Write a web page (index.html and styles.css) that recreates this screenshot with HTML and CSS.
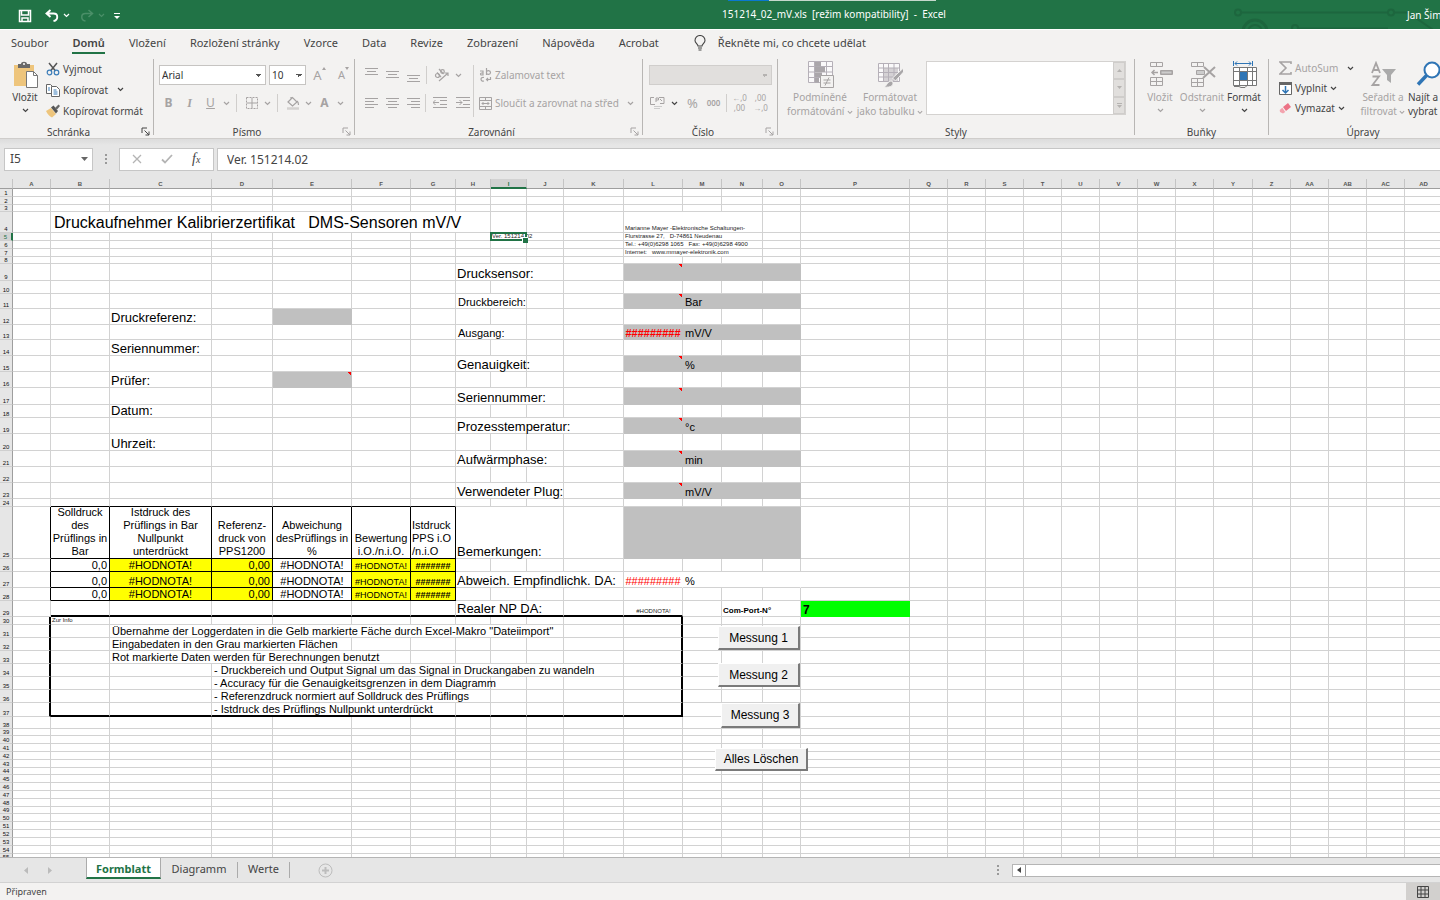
FILE: index.html
```html
<!DOCTYPE html>
<html lang="cs">
<head>
<meta charset="utf-8">
<title>151214_02_mV.xls - Excel</title>
<link rel="stylesheet" href="styles.css">
</head>
<body>
<svg class="defs" aria-hidden="true">
  <symbol id="chev" viewBox="0 0 7 5"><path d="M1 1l2.500 2.500L6 1" fill="none" stroke="currentColor" stroke-width="1.200"/></symbol>
  <symbol id="launch" viewBox="0 0 9 9"><path d="M1 6V1h5M3.500 3.500L8 8M8 4.500V8H4.500" fill="none" stroke="currentColor"/></symbol>
</svg>

<header class="titlebar">
  <div class="qat">
    <button aria-label="Uložit"><svg width="14" height="14" viewBox="0 0 14 14"><path d="M1.500 1.500h11v11h-11zM3.500 2v4h7V2M4 12.500V9h6v3.500" fill="none" stroke="#fff" stroke-width="1.500"/></svg></button>
    <button class="undo" aria-label="Zpět"><svg width="14" height="13" viewBox="0 0 14 13"><path d="M5.500 1L1.500 4.500l4 3.500M2 4.500h6.500c5 0 5 6.500 0 7.500" fill="none" stroke="#fff" stroke-width="1.900"/></svg><svg class="chev"><use href="#chev"/></svg></button>
    <button class="undo redo" aria-label="Znovu"><svg width="14" height="13" viewBox="0 0 14 13"><path d="M8.500 1l4 3.500-4 3.500M12 4.500H5.500c-5 0-5 6.500 0 7.500" fill="none" stroke="currentColor" stroke-width="1.500"/></svg><svg class="chev"><use href="#chev"/></svg></button>
    <button aria-label="Přizpůsobit"><svg width="6" height="8" viewBox="0 0 6 8"><path d="M0 1.500h6" stroke="#fff"/><path d="M0 4h6L3 7z" fill="#fff"/></svg></button>
  </div>
  <div class="doc-title">151214_02_mV.xls&nbsp; [režim kompatibility]&nbsp; -&nbsp; Excel</div>
  <svg class="circuit" width="220" height="29" viewBox="0 0 220 29" fill="none" stroke="#1d663e" stroke-width="2"><circle cx="18" cy="12.500" r="3"/><path d="M21 12.500h147"/><circle cx="171" cy="12.500" r="3"/><path d="M174 12.500h14l26 18"/><circle cx="35" cy="32" r="12" stroke-width="3"/><circle cx="35" cy="32" r="7"/><circle cx="75" cy="28" r="3"/><path d="M78 28.500h90"/></svg>
  <div class="user">Jan Šim</div>
</header>

<nav class="tabs">
  <a href="#">Soubor</a><a href="#" class="on">Domů</a><a href="#">Vložení</a><a href="#">Rozložení stránky</a><a href="#">Vzorce</a><a href="#">Data</a><a href="#">Revize</a><a href="#">Zobrazení</a><a href="#">Nápověda</a><a href="#">Acrobat</a>
  <button class="tell"><svg width="12" height="16" viewBox="0 0 12 16" fill="none" stroke="#444" stroke-width="1.100"><path d="M4 11C4 9 1 8 1 5.500a5 5 0 0110 0C11 8 8 9 8 11zM4 13h4M4.500 15h3"/></svg>Řekněte mi, co chcete udělat</button>
</nav>

<section class="ribbon">
  <div class="group g-clip">
    <div class="tools">
      <button class="big"><svg width="27" height="27" viewBox="0 0 27 27"><path d="M2 4h20v21H2z" fill="#eec57c"/><path d="M6 3h3c0-3 6-3 6 0h3v4H6z" fill="#696969"/><circle cx="12" cy="3" r="1" fill="#fff"/><path d="M14.500 10.500h7l4 4v12h-11z" fill="#fff" stroke="#777"/><path d="M21.500 10.500v4h4" fill="none" stroke="#777"/></svg><span>Vložit</span><svg class="chev"><use href="#chev"/></svg></button>
      <div class="stack">
        <button class="row"><svg width="14" height="14" viewBox="0 0 14 14" fill="none"><path d="M3 1l6.500 8M11 1L4.500 9" stroke="#555" stroke-width="1.500"/><circle cx="3.500" cy="10.500" r="2.300" stroke="#3b7cb8" stroke-width="1.200"/><circle cx="10.500" cy="10.500" r="2.300" stroke="#3b7cb8" stroke-width="1.200"/></svg>Vyjmout</button>
        <button class="row"><svg width="14" height="14" viewBox="0 0 14 14" fill="#fff" stroke="#666"><path d="M.500 1.500h4l2 2v7h-6z"/><path d="M5.500 3.500h5l3 3v7h-8z"/><path d="M2 5h2M2 7h2M7.500 7h3M7.500 9h4M7.500 11h4" stroke="#3b7cb8"/></svg>Kopírovat<svg class="chev gap"><use href="#chev"/></svg></button>
        <button class="row"><svg width="14" height="14" viewBox="0 0 14 14"><path d="M0 7l5-3 5 6-4 3.500C3.500 12.500 1.500 10 0 7z" fill="#eec57c"/><path d="M5 3.500l2.500-2L12 7l-2 2.500z" fill="#555"/><path d="M9 4l3.500-3.500L14 2l-3 3.500z" fill="#666"/></svg>Kopírovat formát</button>
      </div>
    </div>
    <div class="glabel">Schránka</div><button class="launch" aria-label="Schránka – více"><svg><use href="#launch"/></svg></button>
  </div>

  <div class="group g-font">
    <div class="lines">
      <div class="line">
        <select class="fontname" aria-label="Písmo"><option>Arial</option></select>
        <select class="fontsize" aria-label="Velikost písma"><option>10</option></select>
        <button class="ib off" aria-label="Zvětšit písmo"><span class="grow">A</span><svg class="tick" viewBox="0 0 4 3"><path d="M0 3l2-3 2 3z" fill="currentColor"/></svg></button>
        <button class="ib off" aria-label="Zmenšit písmo"><span class="shrink">A</span><svg class="tick" viewBox="0 0 4 3"><path d="M0 0l2 3 2-3z" fill="currentColor"/></svg></button>
      </div>
      <div class="line off">
        <button class="ib"><b>B</b></button><button class="ib serif"><i>I</i></button><button class="ib"><u>U</u></button><svg class="chev"><use href="#chev"/></svg><span class="sep"></span>
        <button class="ib" aria-label="Ohraničení"><svg width="12" height="12" viewBox="0 0 12 12" fill="none" stroke="currentColor"><path d="M.500.500h11v11H.500z" stroke-dasharray="2 1"/><path d="M6 1v10M1 6h10"/></svg></button><svg class="chev"><use href="#chev"/></svg><span class="sep"></span>
        <button class="ib" aria-label="Barva výplně"><svg width="14" height="14" viewBox="0 0 14 14" fill="none" stroke="currentColor" stroke-width="1.200"><path d="M2 6l4.500-4.500L11 6 6.500 10zM5 4V1M11 5c1.500 1 1.500 3 1.500 4"/><path d="M1 12.500h12" stroke="#d4d2d0" stroke-width="2.500"/></svg></button><svg class="chev"><use href="#chev"/></svg>
        <button class="ib" aria-label="Barva písma"><b>A</b></button><svg class="chev"><use href="#chev"/></svg>
      </div>
    </div>
    <div class="glabel">Písmo</div><button class="launch off" aria-label="Písmo – více"><svg><use href="#launch"/></svg></button>
  </div>

  <div class="group g-align">
    <div class="tools">
      <div class="lines off">
        <div class="line">
          <button class="ib" aria-label="Nahoru"><svg width="13" height="16" viewBox="0 0 13 16" stroke="currentColor"><path d="M0 1.500h13M2 4.500h9M0 7.500h13"/></svg></button><button class="ib" aria-label="Na střed svisle"><svg width="13" height="16" viewBox="0 0 13 16" stroke="currentColor"><path d="M0 4.500h13M2 7.500h9M0 10.500h13"/></svg></button><button class="ib" aria-label="Dolů"><svg width="13" height="16" viewBox="0 0 13 16" stroke="currentColor"><path d="M0 8.500h13M2 11.500h9M0 14.500h13"/></svg></button><span class="sep"></span>
          <button class="ib wide" aria-label="Orientace"><svg width="15" height="14" viewBox="0 0 15 14" fill="none" stroke="currentColor" stroke-width="1.200"><circle cx="3.500" cy="7.500" r="2"/><path d="M3 4.500l4 4.500M5 1l4.500 5"/><circle cx="8.500" cy="3.500" r="1.800"/><path d="M5 13l8.500-7.500M10.500 5h3.500v3"/></svg></button><svg class="chev"><use href="#chev"/></svg>
        </div>
        <div class="line">
          <button class="ib" aria-label="Vlevo"><svg width="13" height="11" viewBox="0 0 13 11" stroke="currentColor"><path d="M0 .500h13M0 3.500h9M0 6.500h13M0 9.500h9"/></svg></button><button class="ib" aria-label="Na střed"><svg width="13" height="11" viewBox="0 0 13 11" stroke="currentColor"><path d="M0 .500h13M2 3.500h9M0 6.500h13M2 9.500h9"/></svg></button><button class="ib" aria-label="Vpravo"><svg width="13" height="11" viewBox="0 0 13 11" stroke="currentColor"><path d="M0 .500h13M4 3.500h9M0 6.500h13M4 9.500h9"/></svg></button><span class="sep"></span>
          <button class="ib wide" aria-label="Zmenšit odsazení"><svg width="14" height="12" viewBox="0 0 14 12" fill="none" stroke="currentColor"><path d="M0 .500h14M7 3.500h7M7 7.500h7M0 10.500h14M0 5.500h6M2.500 3L0 5.500 2.500 8"/></svg></button><button class="ib" aria-label="Zvětšit odsazení"><svg width="14" height="12" viewBox="0 0 14 12" fill="none" stroke="currentColor"><path d="M0 .500h14M7 3.500h7M7 7.500h7M0 10.500h14M0 5.500h6M3.500 3L6 5.500 3.500 8"/></svg></button>
        </div>
      </div>
      <span class="sep tall"></span>
      <div class="lines off">
        <div class="line"><button class="row"><svg width="13" height="14" viewBox="0 0 13 14" fill="none" stroke="currentColor" stroke-width="1.200"><path d="M1 3h3v4H2.500a1 1 0 010-2H4M7.500 0v7M7.500 4c0-2 4-2 4 .500S7.500 7 7.500 5M5 9.500c-4-1-4 4.500 0 3.500M11.500 9v2.500H7.500M9 10l-1.500 1.500L9 13"/></svg>Zalamovat text</button></div>
        <div class="line"><button class="row"><svg width="13" height="13" viewBox="0 0 13 13" fill="none" stroke="currentColor"><path d="M.500.500h12v12H.500zM.500 3.500h12M.500 9.500h12M6.500.500v3M6.500 9.500v3M3 6.500h7M4.500 5L3 6.500 4.500 8M8.500 5L10 6.500 8.500 8"/></svg>Sloučit a zarovnat na střed<svg class="chev"><use href="#chev"/></svg></button></div>
      </div>
    </div>
    <div class="glabel">Zarovnání</div><button class="launch off" aria-label="Zarovnání – více"><svg><use href="#launch"/></svg></button>
  </div>

  <div class="group g-num">
    <div class="lines">
      <div class="line"><select class="numfmt" disabled aria-label="Formát čísla"><option></option></select></div>
      <div class="line off">
        <button class="ib" aria-label="Měna"><svg width="15" height="14" viewBox="0 0 15 14" fill="none" stroke="currentColor"><path d="M4 1.500H.500v7H5M9 1.500h5v6h-4M6 6V2h2.500v2H6M10 3l2 2"/><path d="M4 10.500h8M4 12.500h6" stroke="#ccc"/></svg></button><svg class="chev dark"><use href="#chev"/></svg>
        <button class="ib pct">%</button><button class="ib zeros">000</button><span class="sep"></span>
        <button class="ib dec"><span>←,0</span><span>,00</span></button><button class="ib dec"><span>,00</span><span>→,0</span></button>
      </div>
    </div>
    <div class="glabel">Číslo</div><button class="launch off" aria-label="Číslo – více"><svg><use href="#launch"/></svg></button>
  </div>

  <div class="group g-style">
    <div class="tools">
      <button class="big two off"><svg width="27" height="27" viewBox="0 0 27 27" fill="none" stroke="currentColor"><path d="M1.500.500h24v21h-24zM1.500 5.500h24M1.500 11h24M1.500 16.500h24M7.500.500v21M19.500.500v21" stroke="#b5b0b8" fill="#faf9fa"/><path d="M8 1h6v4.500H8zM8 6h10v5H8zM8 11.500h7V16H8zM8 17h4v4.500H8z" fill="#aaa6aa" stroke="none"/><path d="M13.500 14.500h13v12h-13z" fill="#f3f2f1"/><path d="M16.500 19h7M16.500 22h7M22 16.500l-4 8" /></svg><span>Podmíněné</span><span>formátování <svg class="chev"><use href="#chev"/></svg></span></button>
      <button class="big two off"><svg width="27" height="27" viewBox="0 0 27 27" fill="none" stroke="currentColor"><path d="M1.500 2.500h21v18h-21z" fill="#faf9fa" stroke="none"/><path d="M7 7h14v13H7z" fill="#d5d2d5" stroke="none"/><path d="M1.500 2.500h21v18h-21zM1.500 7h21M1.500 11.500h21M1.500 16h21M6.500 2.500v18M11.500 2.500v18M17 2.500v18" stroke="#b5b0b8"/><path d="M26.500 7v4l-8 9-3-3zM7 26c3-1 3-6 8-6 3 4-1 7-8 6z" fill="#a8a6a8" stroke="#f3f2f1"/></svg><span>Formátovat</span><span>jako tabulku <svg class="chev"><use href="#chev"/></svg></span></button>
      <div class="gallery"><div class="swatches"></div><div class="spin"><button aria-label="Nahoru"><svg viewBox="0 0 5 3"><path d="M0 3l2.500-3L5 3z" fill="currentColor"/></svg></button><button aria-label="Dolů"><svg viewBox="0 0 5 3"><path d="M0 0l2.500 3L5 0z" fill="currentColor"/></svg></button><button aria-label="Více"><svg viewBox="0 0 5 5"><path d="M0 .500h5" stroke="currentColor"/><path d="M0 2l2.500 3L5 2z" fill="currentColor"/></svg></button></div></div>
    </div>
    <div class="glabel">Styly</div>
  </div>

  <div class="group g-cells">
    <div class="tools">
      <button class="big off"><svg width="27" height="27" viewBox="0 0 27 27" fill="none" stroke="currentColor"><path d="M3.500 1.500h12v4h-12zM9.500 1.500v4M3.500 16.500h12v8h-12zM3.500 20.500h12M9.500 16.500v8M13.500 9.500h12v4h-12z"/><path d="M14 10h11v3H14z" fill="#ccc"/><path d="M5 11.500h6M7.500 9L5 11.500 7.500 14" stroke-width="1.500"/></svg><span>Vložit</span><svg class="chev"><use href="#chev"/></svg></button>
      <button class="big off"><svg width="27" height="27" viewBox="0 0 27 27" fill="none" stroke="currentColor"><path d="M2.500 1.500h12v4h-12zM8.500 1.500v4M2.500 17.500h12v8h-12zM2.500 21.500h12M8.500 17.500v8"/><path d="M7.500 9.500h8v4h-8z" fill="#ccc"/><path d="M15 6l11 10M26 6L14 17" stroke-width="2"/></svg><span>Odstranit</span><svg class="chev"><use href="#chev"/></svg></button>
      <button class="big"><svg width="27" height="27" viewBox="0 0 27 27" fill="none" stroke="#777"><path d="M2.500 6.500h23v18h-23z" fill="#fff"/><path d="M2.500 10.500h23M2.500 19.500h23M8.500 6.500v18M16.500 6.500v18M21.500 6.500v18"/><path d="M9 11h7v8H9z" fill="#2f75b5" stroke="none"/><path d="M2.500 0v5M21.500 0v5M4 2.500h16M6 .500l-2 2 2 2M18 .500l2 2-2 2" stroke="#2f75b5"/><path d="M3 25.500h5l2 1h4l2-2h4" stroke="#777"/></svg><span>Formát</span><svg class="chev"><use href="#chev"/></svg></button>
    </div>
    <div class="glabel">Buňky</div>
  </div>

  <div class="group g-edit">
    <div class="tools">
      <div class="stack">
        <button class="row off"><svg width="13" height="14" viewBox="0 0 13 14" fill="none" stroke="currentColor" stroke-width="1.600"><path d="M12 3V1H1l6 6-6 6h11v-2"/></svg>AutoSum<svg class="chev gap dark"><use href="#chev"/></svg></button>
        <button class="row"><svg width="13" height="14" viewBox="0 0 13 14"><path d="M.500 1.500h12v12H.500z" fill="#fff" stroke="#666"/><path d="M0 1h13v3H0z" fill="#666"/><path d="M6.500 5v7M3.500 9l3 3 3-3" fill="none" stroke="#2f75b5" stroke-width="1.500"/></svg>Vyplnit<svg class="chev"><use href="#chev"/></svg></button>
        <button class="row"><svg width="13" height="14" viewBox="0 0 13 14"><path d="M4 6l5-4 3 4-5 4z" fill="#ec7386"/><path d="M3.300 6.700L6.300 11 4 12.500 1 11 .700 9z" fill="#f3a3ae"/></svg>Vymazat<svg class="chev"><use href="#chev"/></svg></button>
      </div>
      <button class="big two off"><svg width="27" height="27" viewBox="0 0 27 27" fill="none" stroke="currentColor" stroke-width="1.800"><path d="M2 12L6 2l4 10M3.500 9h5M2.500 15.500H9L2.500 24H9.500"/><path d="M12 8h14l-5 6v8l-4-3v-5z" fill="#aaa" stroke="none"/></svg><span>Seřadit a</span><span>filtrovat <svg class="chev"><use href="#chev"/></svg></span></button>
      <button class="big two find"><svg width="27" height="27" viewBox="0 0 27 27" fill="none" stroke="#2f75b5"><circle cx="17" cy="9" r="7.500" fill="#fff" stroke-width="2"/><path d="M11.500 14.500L3 23.500" stroke-width="3.500"/></svg><span>Najít a</span><span>vybrat</span></button>
    </div>
    <div class="glabel">Úpravy</div>
  </div>
</section>

<section class="formula">
  <div class="namebox"><input aria-label="Pole názvů" value="I5"><svg width="7" height="4" viewBox="0 0 7 4"><path d="M0 0h7L3.500 4z" fill="#666"/></svg></div>
  <svg class="dots" width="2" height="10" viewBox="0 0 2 10" fill="#999"><path d="M0 0h2v2H0zM0 4h2v2H0zM0 8h2v2H0z"/></svg>
  <div class="fxbox">
    <button aria-label="Zrušit"><svg width="10" height="10" viewBox="0 0 10 10" stroke="#b4b4b4" stroke-width="1.300"><path d="M1 1l8 8M9 1L1 9"/></svg></button>
    <button aria-label="Zadat"><svg width="12" height="10" viewBox="0 0 12 10" fill="none" stroke="#b4b4b4" stroke-width="1.800"><path d="M1 5.500L4 8.500 11 1"/></svg></button>
    <button class="fx"><i>f<small>x</small></i></button>
  </div>
  <input class="fbar" aria-label="Řádek vzorců" value="Ver. 151214.02">
</section>

<main class="sheet">
  <table id="grid"></table>
  <button class="macro m1">Messung 1</button>
  <button class="macro m2">Messung 2</button>
  <button class="macro m3">Messung 3</button>
  <button class="macro m4">Alles Löschen</button>
</main>

<nav class="sheets">
  <div class="arrows"><button aria-label="Předchozí list"><svg width="4" height="7" viewBox="0 0 4 7"><path d="M4 0v7L0 3.500z" fill="#bbb"/></svg></button><button aria-label="Další list"><svg width="4" height="7" viewBox="0 0 4 7"><path d="M0 0v7l4-3.500z" fill="#bbb"/></svg></button></div>
  <a href="#" class="on">Formblatt</a><a href="#" class="t2">Diagramm</a><a href="#" class="t3">Werte</a>
  <button class="add" aria-label="Nový list"><svg width="15" height="15" viewBox="0 0 15 15" fill="none" stroke="#bdbdbd"><circle cx="7.500" cy="7.500" r="6.500"/><path d="M7.500 4v7M4 7.500h7" stroke-width="2"/></svg></button>
  <svg class="dots" width="2" height="10" viewBox="0 0 2 10" fill="#999"><path d="M0 0h2v2H0zM0 4h2v2H0zM0 8h2v2H0z"/></svg>
  <div class="hscroll"><button aria-label="Posunout vlevo"><svg width="4" height="6" viewBox="0 0 4 6"><path d="M4 0v6L0 3z" fill="#444"/></svg></button></div>
</nav>

<footer class="status"><span>Připraven</span><button aria-label="Normální zobrazení"><svg width="12" height="12" viewBox="0 0 12 12" fill="none" stroke="#444"><path d="M.500.500h11v11H.500zM.500 4h11M.500 8h11M4 .500v11M8 .500v11"/></svg></button></footer>
<script src="sheet.js"></script>
</body>
</html>
```

FILE: styles.css
```css
* { box-sizing: border-box; }
body { margin: 0; height: 100vh; display: flex; flex-direction: column; overflow: hidden; background: #e6e6e6; color: #444; font: 11px/14px "Noto Sans", "Open Sans", sans-serif; }
button { border: 0; padding: 0; margin: 0; background: none; color: inherit; font: inherit; white-space: nowrap; }
a { color: inherit; text-decoration: none; }
input, select { font: inherit; color: inherit; border-radius: 0; }
svg { display: block; flex: none; }
.defs { position: absolute; width: 0; height: 0; }
.chev { display: inline-block; width: 7px; height: 5px; }
.off { color: #a6a3a3; }
.dark { color: #444; }

/* title bar */
.titlebar { position: relative; flex: none; height: 29px; display: flex; align-items: center; background: #217346; color: #fff; overflow: hidden; }
.titlebar::before { content: ""; position: absolute; top: 0; left: 728px; width: 208px; height: 1px; background: linear-gradient(90deg, #0a78d0 41px, #c5d8cc 41px); }
.qat { flex: 0 0 50%; display: flex; align-items: center; gap: 13px; padding: 2px 0 0 18px; }
.undo { display: flex; align-items: center; gap: 4px; margin-right: -3px; }
.redo { color: #4a8f68; margin-right: -4px; }
.doc-title { padding: 0 0 2px 2px; font-size: 10px; white-space: nowrap; }
.circuit { position: absolute; right: 0; top: 0; }
.user { position: relative; margin-left: auto; width: 33px; font-size: 10px; white-space: nowrap; }

/* ribbon tabs */
.tabs { flex: none; height: 28px; padding-left: 11px; display: flex; align-items: center; gap: 24px; background: #f3f2f1; border-top: 1px solid #fff; white-space: nowrap; }
.tabs a { line-height: 18px; border-bottom: 2px solid transparent; }
.tabs .on { font-weight: 600; border-color: #217346; }
.tell { display: flex; align-items: center; gap: 12px; margin: 0 0 2px 11px; }

/* ribbon */
.ribbon { flex: none; display: flex; height: 82px; background: #f3f2f1; border-bottom: 1px solid #cfcdcb; }
.group { position: relative; flex: none; display: flex; flex-direction: column; justify-content: space-between; margin: 2px 0 3px; padding-top: 2px; border-right: 1px solid #b8b6b4; }
.glabel { text-align: center; line-height: 12px; font-size: 10px; margin-bottom: -3px; }
.launch { position: absolute; right: 3px; bottom: -1px; }
.launch svg { width: 9px; height: 9px; }
.g-clip { width: 154px; }
.g-font { width: 201px; }
.g-align { width: 288px; }
.g-num { width: 135px; }
.g-style { width: 357px; }
.g-cells { width: 134px; }
.g-edit { flex: 1 0 171px; border: 0; }
.g-edit .glabel { width: 188px; }
.g-clip .glabel { padding-right: 16px; }
.g-num .glabel, .g-font .glabel, .g-align .glabel { padding-right: 14px; }
.tools { display: flex; align-items: flex-start; }
.big { display: flex; flex-direction: column; align-items: center; width: 42px; font-size: 10px; line-height: 14px; }
.big span { margin-top: 2px; }
.big span + span { margin-top: 0; }
.big > .chev { margin-top: 4px; }
.g-clip .tools, .g-cells .tools { padding-left: 4px; }
.g-style .tools { padding-left: 7px; }
.g-style .big { width: 70px; }
.two .chev { width: 6px; }
.stack { display: flex; flex-direction: column; margin-top: -3px; }
.row { display: flex; align-items: center; gap: 3px; height: 20px; font-size: 10px; }
.row .gap { margin-left: 6px; }
.g-clip .row { height: 21px; }
.g-edit .stack { width: 92px; padding-left: 10px; }
.g-edit .big { width: 44px; }
.g-edit .find { align-items: flex-start; padding-left: 3px; }
.find svg { margin-left: 7px; }
.lines { padding-left: 4px; }
.line { display: flex; align-items: center; height: 28px; }
.ib { width: 21px; height: 20px; display: flex; align-items: center; justify-content: center; font-size: 12px; }
.serif { font-family: "Liberation Serif", serif; font-weight: bold; }
.line > .chev { margin: 0 2px; }
.sep { width: 1px; height: 18px; margin: 0 4px; background: #d0cecc; }
.g-font .line:first-child { gap: 3px; padding-left: 1px; }
.g-align .tools { align-items: center; }
.g-align .lines { padding-left: 6px; width: 118px; }
.g-align .tall + .lines { padding-left: 5px; width: auto; }
.g-align .sep { margin: 0 2px; }
.g-align .sep.tall { height: 52px; margin: 3px 0 0; }
.g-align .row .chev { margin-left: 5px; }
.wide { width: 24px; }
select { appearance: none; height: 20px; padding: 0 2px; border: 1px solid #c6c4c2; color: #333; background-color: #fff; background-image: linear-gradient(to top right, transparent 50%, #555 50%), linear-gradient(to top left, transparent 50%, #555 50%); background-size: 3px 3px; background-position: right 6px center, right 3px center; background-repeat: no-repeat; font-size: 10px; }
.fontname { width: 107px; }
.fontsize { width: 37px; }
.numfmt { width: 123px; margin-left: 2px; background-color: #e1dfdd; background-image: linear-gradient(to top right, transparent 50%, #b5b3b1 50%), linear-gradient(to top left, transparent 50%, #b5b3b1 50%); opacity: 1; border-color: #d0cecc; }
.grow { font-size: 13px; }
.shrink { font-size: 11px; }
.tick { width: 4px; height: 3px; align-self: flex-start; margin-top: 2px; }
.g-num .ib { width: 21px; }
.g-num .line > .chev { margin: 0 4px 0 3px; }
.g-num .sep { margin: 0 2px; }
.g-num .pct { font-size: 13px; }
.g-num .zeros { font-size: 8px; font-weight: 600; }
.g-num .dec { flex-direction: column; font-size: 8px; line-height: 10px; }
.gallery { display: flex; flex: none; width: 200px; height: 54px; margin-left: 1px; border: 1px solid #d4d2d0; background: #fff; }
.swatches { flex: 1; }
.spin { width: 12px; display: flex; flex-direction: column; background: #e1dfdd; color: #b5b3b1; }
.spin button { flex: 1; display: grid; place-items: center; border: 1px solid #cfcdcb; }
.spin svg { width: 5px; height: 5px; }

/* formula bar */
.formula { flex: none; display: flex; align-items: center; height: 40px; padding-left: 4px; background: linear-gradient(#dcdcdc, #e6e6e6 6px); font-size: 12px; }
.namebox, .fxbox { display: flex; align-items: center; height: 23px; background: #fff; border: 1px solid #c6c6c6; }
.namebox { width: 89px; padding-right: 4px; }
.namebox input { flex: 1; min-width: 0; border: 0; padding: 0 5px; background: none; }
.formula .dots { margin: 0 12px; }
.fxbox { width: 95px; padding: 0 2px; }
.fxbox button { flex: 1; display: flex; justify-content: center; }
.fx { font: 14px "Liberation Serif", serif; }
.fx small { font-size: 10px; }
.fbar { flex: 1; min-width: 0; height: 23px; margin-left: 3px; padding: 0 9px; border: 1px solid #c6c6c6; border-right: 0; background: #fff; }

/* worksheet */
.sheet { position: relative; flex: 1; min-height: 0; overflow: hidden; background: #fff; font-family: "Liberation Sans", Arial, sans-serif; color: #000; }
#grid { table-layout: fixed; border-collapse: separate; border-spacing: 0; font-size: 11px; line-height: 12px; }
#grid td, #grid th { padding: 0; border: 0 solid #d2d2d2; border-width: 0 1px 1px 0; white-space: pre; vertical-align: bottom; text-align: left; }
#grid th { background: #e6e6e6; font-size: 6px; line-height: 6px; font-weight: normal; text-align: center; color: #111; }
#grid thead th { border-color: #b0b0b0 #c4c4c4 #9e9e9e; font-weight: bold; color: #555; padding-bottom: 1px; }
#grid tbody th { border-right-color: #9e9e9e; border-bottom-color: #cfcfcf; }
#grid .cur { background: #d2d2d2; color: #217346; }
#grid thead .cur { border-bottom: 2px solid #217346; padding: 0; }
#grid tbody .cur { border-right: 2px solid #217346; }
#grid .title { font-size: 16px; line-height: 18px; padding-left: 3px; }
#grid .lab { font-size: 13px; line-height: 12px; padding-left: 1px; }
#grid .txt { padding-left: 2px; line-height: 12px; }
#grid .tiny { font-size: 6px; line-height: 7px; padding-left: 1px; color: #222; }
#grid .gray { background: #c0c0c0; border-color: #c0c0c0; }
#grid .plain { border-right-color: #fff; }
#grid .red { color: #f00; text-align: center; }
#grid .mid { text-align: center; }
#grid .right { text-align: right; padding-right: 2px; }
#grid .yel { background: #ff0; }
#grid .sm { font-size: 9px; line-height: 10px; text-align: center; }
#grid .bold { font-weight: bold; }
#grid .port { font-size: 8px; line-height: 10px; font-weight: bold; padding-left: 1px; }
#grid .green { background: #0f0; border-color: #0f0; font-weight: bold; padding-left: 2px; font-size: 12px; }
#grid .bb { border-bottom-color: #000; }
#grid .br { border-right-color: #000; }
#grid .bb2 { border-bottom: 2px solid #000; }
#grid .br2 { border-right: 2px solid #000; }
#grid .head > div { height: 51px; display: flex; flex-direction: column; justify-content: flex-end; line-height: 13px; text-align: center; }
#grid .head.lft > div { text-align: left; padding-left: 1px; }
.note, .sel { position: relative; }
.note::after { content: ""; position: absolute; top: 0; right: 0; width: 3px; height: 3px; background: linear-gradient(to top right, transparent 40%, #f00 40%); }
.sel::after { content: ""; position: absolute; inset: -1px; border: 2px solid #217346; }
.sel::before { content: ""; position: absolute; z-index: 1; right: -2px; bottom: -3px; width: 5px; height: 5px; background: #217346; border: 1px solid #fff; border-width: 1px 0 0 1px; }
.macro { position: absolute; background: #f0f0f0; color: #000; font-size: 12px; border: 1px solid #fff; border-right: 2px solid #7a7a7a; border-bottom: 2px solid #7a7a7a; }
.m1 { left: 718px; top: 447px; width: 82px; height: 24px; }
.m2 { left: 718px; top: 484px; width: 82px; height: 24px; }
.m3 { left: 721px; top: 524px; width: 79px; height: 25px; }
.m4 { left: 715px; top: 569px; width: 93px; height: 23px; }

/* sheet tabs */
.sheets { flex: none; display: flex; align-items: center; height: 26px; background: #e6e6e6; border-top: 1px solid #b5b5b5; border-bottom: 1px solid #d2d2d2; }
.arrows { width: 86px; display: flex; gap: 20px; padding-left: 24px; }
.sheets a { height: 16px; line-height: 14px; text-align: center; border-right: 1px solid #ababab; }
.sheets .on { align-self: flex-start; width: 75px; height: 21px; line-height: 22px; background: #fff; color: #217346; font-weight: bold; border: 1px solid #ababab; border-top: 0; border-bottom: 2px solid #217346; }
.t2 { width: 77px; }
.t3 { width: 52px; }
.add { margin: 0 auto 0 28px; }
.sheets .dots { margin-right: 13px; }
.hscroll { width: 428px; height: 13px; border: 1px solid #b5b5b5; border-right: 0; background: #fff; display: flex; }
.hscroll button { width: 13px; display: grid; place-items: center; border-right: 1px solid #999; }
.status { flex: none; display: flex; align-items: center; justify-content: space-between; height: 17px; padding-left: 6px; background: #f3f2f1; font-size: 9px; }
.status button { width: 34px; height: 17px; display: grid; place-items: center; background: #d2d0ce; }
```

FILE: sheet.js
```js
const cols = {
  A: 38, B: 59, C: 102, D: 61, E: 79, F: 59, G: 45, H: 35, I: 36, J: 37, K: 60, L: 59, M: 39,
  N: 41, O: 38, P: 109, Q: 38, R: 38, S: 38, T: 38, U: 38, V: 38, W: 38, X: 38, Y: 39, Z: 38,
  AA: 38, AB: 38, AC: 38, AD: 38
};
const rows = [
  8, 8, 7, 21, 8, 8, 8, 7, 17, 13, 15, 16, 15, 16, 16, 16, 17, 13, 16, 17, 16, 16, 16, 8, 52,
  13, 16, 13, 16, 8, 13, 13, 13, 13, 13, 13, 13, 12, 7, 8, 8, 8, 8, 7, 8, 8, 8, 8, 7, 8, 8, 8, 8, 8, 7
];

// address: [text, classes, columns covered]
const cells = {
  B4: ['Druckaufnehmer Kalibrierzertifikat   DMS-Sensoren mV/V', 'title', 7],
  L4: ['Marianne Mayer -Elektronische Schaltungen-', 'tiny', 3],
  I5: ['Ver. 151214.02', 'tiny sel', 1],
  L5: ['Flurstrasse 27,   D-74861 Neudenau', 'tiny', 3],
  L6: ['Tel.: +49(0)6298 1065   Fax: +49(0)6298 4900', 'tiny', 3],
  L7: ['Internet:   www.mmayer-elektronik.com', 'tiny', 3],
  H9: ['Drucksensor:', 'lab', 3], L9: ['', 'gray note', 1], M9: ['', 'gray', 3],
  H11: ['Druckbereich:', 'txt', 2], L11: ['', 'gray note', 1], M11: ['Bar', 'gray txt', 3],
  C12: ['Druckreferenz:', 'lab', 1], E12: ['', 'gray', 1],
  H13: ['Ausgang:', 'txt', 2], L13: ['#########', 'gray red bold', 1], M13: ['mV/V', 'gray txt', 3],
  C14: ['Seriennummer:', 'lab', 1],
  H15: ['Genauigkeit:', 'lab', 2], L15: ['', 'gray note', 1], M15: ['%', 'gray txt', 3],
  C16: ['Prüfer:', 'lab', 1], E16: ['', 'gray note', 1],
  H17: ['Seriennummer:', 'lab', 3], L17: ['', 'gray note', 1], M17: ['', 'gray', 3],
  C18: ['Datum:', 'lab', 1],
  H19: ['Prozesstemperatur:', 'lab', 4], L19: ['', 'gray note', 1], M19: ['°c', 'gray txt', 3],
  C20: ['Uhrzeit:', 'lab', 1],
  H21: ['Aufwärmphase:', 'lab', 3], L21: ['', 'gray note', 1], M21: ['min', 'gray txt', 3],
  H23: ['Verwendeter Plug:', 'lab', 3], L23: ['', 'gray note', 1], M23: ['mV/V', 'gray txt', 3],
  B25: ['Solldruck\ndes\nPrüflings in\nBar', 'head', 1],
  C25: ['Istdruck des\nPrüflings in Bar\nNullpunkt\nunterdrückt', 'head', 1],
  D25: ['Referenz-\ndruck von\nPPS1200', 'head', 1],
  E25: ['Abweichung\ndesPrüflings in\n%', 'head', 1],
  F25: ['Bewertung\ni.O./n.i.O.', 'head', 1],
  G25: ['Istdruck\nPPS i.O\n/n.i.O', 'head lft', 1],
  H25: ['Bemerkungen:', 'lab', 3], L25: ['', 'gray', 4],
  H27: ['Abweich. Empfindlichk. DA:', 'lab', 4],
  L27: ['#########', 'red plain', 1], M27: ['%', 'txt plain', 3],
  H29: ['Realer NP DA:', 'lab', 3], L29: ['#HODNOTA!', 'tiny mid', 1],
  N29: ['Com-Port-N°', 'port', 2], P29: ['7', 'green', 1],
  B30: ['Zur Info', 'tiny', 1],
  C31: ['Übernahme der Loggerdaten in die Gelb markierte Fäche durch Excel-Makro "Dateiimport"', 'txt', 8],
  C32: ['Eingabedaten in den Grau markierten Flächen', 'txt', 3],
  C33: ['Rot markierte Daten werden für Berechnungen benutzt', 'txt', 4],
  D34: ['- Druckbereich und Output Signal um das Signal in Druckangaben zu wandeln', 'txt', 8],
  D35: ['- Accuracy für die Genauigkeitsgrenzen in dem Diagramm', 'txt', 5],
  D36: ['- Referenzdruck normiert auf Solldruck des Prüflings', 'txt', 5],
  D37: ['- Istdruck des Prüflings Nullpunkt unterdrückt', 'txt', 4]
};
for (const r of [26, 27, 28]) {
  cells['B' + r] = ['0,0', 'right', 1];
  cells['C' + r] = ['#HODNOTA!', 'yel mid', 1];
  cells['D' + r] = ['0,00', 'yel right', 1];
  cells['E' + r] = ['#HODNOTA!', 'mid', 1];
  cells['F' + r] = ['#HODNOTA!', 'yel sm', 1];
  cells['G' + r] = ['#######', 'yel sm bold', 1];
}

const names = Object.keys(cols);
const at = name => names.indexOf(name);

function edges(row, first, last) {
  const list = [];
  if (row >= 24 && row <= 28 && first >= at('B') && first <= at('G')) list.push('bb');
  if (row >= 25 && row <= 28 && first <= at('G')) list.push('br');
  if ((row === 29 || row === 37) && first >= at('B') && last <= at('L')) list.push('bb2');
  if (row >= 30 && row <= 37 && (last === at('A') || last === at('L'))) list.push('br2');
  return list;
}

function add(parent, tag, text, className) {
  const el = document.createElement(tag);
  el.textContent = text;
  if (className) el.className = className;
  parent.append(el);
  return el;
}

const table = document.getElementById('grid');
const group = add(table, 'colgroup', '');
add(group, 'col', '').style.width = '13px';
let total = 13;
for (const name of names) {
  add(group, 'col', '').style.width = cols[name] + 'px';
  total += cols[name];
}
table.style.width = total + 'px';

const headRow = add(add(table, 'thead', ''), 'tr', '');
headRow.style.height = '10px';
add(headRow, 'th', '');
for (const name of names) add(headRow, 'th', name, name === 'I' ? 'cur' : '');

const body = add(table, 'tbody', '');
rows.forEach((height, index) => {
  const row = index + 1;
  const tr = add(body, 'tr', '');
  tr.style.height = height + 'px';
  add(tr, 'th', row, row === 5 ? 'cur' : '');
  for (let c = 0; c < names.length;) {
    const [text, kind, span] = cells[names[c] + row] || ['', '', 1];
    const classes = [kind, ...edges(row, c, c + span - 1)].join(' ').trim();
    const td = add(tr, 'td', '', classes);
    if (kind.startsWith('head')) add(td, 'div', text);
    else td.textContent = text;
    if (span > 1) td.colSpan = span;
    c += span;
  }
});
```
